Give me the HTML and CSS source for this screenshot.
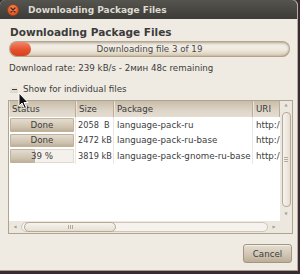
FILE: index.html
```html
<!DOCTYPE html>
<html lang="en">
<head>
    <meta charset="UTF-8">
    <title>Downloading Package Files</title>
    <link rel="stylesheet" href="styles.css">
</head>
<body>
    <div class="window">
        <div class="titlebar">
            <span class="close">
                <svg width="12" height="12" viewBox="0 0 12 12">
                    <circle cx="6" cy="6" r="5.5" fill="#e6602c" stroke="#9c3d17" stroke-width="1"/>
                    <circle cx="6" cy="4.5" r="3.5" fill="#f3936a" opacity="0.5"/>
                    <path d="M4 4 L8 8 M8 4 L4 8" stroke="#4a2a1c" stroke-width="1.3" stroke-linecap="round"/>
                </svg>
            </span>
            <span class="title">Downloading Package Files</span>
        </div>

        <div class="content">
            <h1 class="heading">Downloading Package Files</h1>

            <div class="progress">
                <div class="progress-fill"></div>
                <span class="progress-text">Downloading file 3 of 19</span>
            </div>

            <p class="rate">Download rate: 239 kB/s - 2мин 48с remaining</p>

            <div class="expander">
                <span class="exp-box"></span>
                <span class="exp-label">Show for individual files</span>
            </div>

            <div class="frame">
                <div class="view">
                    <div class="list">
                        <div class="row head">
                            <div class="cell">Status</div>
                            <div class="cell">Size</div>
                            <div class="cell">Package</div>
                            <div class="cell">URI</div>
                        </div>
                        <div class="row">
                            <div class="cell status"><div class="bar"><div class="bar-fill" style="width: 100%"></div><span>Done</span></div></div>
                            <div class="cell size">2058  B</div>
                            <div class="cell">language-pack-ru</div>
                            <div class="cell uri">http:/</div>
                        </div>
                        <div class="row">
                            <div class="cell status"><div class="bar"><div class="bar-fill" style="width: 100%"></div><span>Done</span></div></div>
                            <div class="cell size">2472 kB</div>
                            <div class="cell">language-pack-ru-base</div>
                            <div class="cell uri">http:/</div>
                        </div>
                        <div class="row">
                            <div class="cell status"><div class="bar"><div class="bar-fill" style="width: 39%"></div><span>39 %</span></div></div>
                            <div class="cell size">3819 kB</div>
                            <div class="cell">language-pack-gnome-ru-base</div>
                            <div class="cell uri">http:/</div>
                        </div>
                    </div>
                    <div class="vscroll">
                        <span class="arrow">&#9650;</span>
                        <div class="vslider"><span class="grip-h"></span></div>
                        <span class="arrow">&#9660;</span>
                    </div>
                </div>
                <div class="hscroll">
                    <span class="arrow">&#9664;</span>
                    <div class="htrough">
                        <div class="hslider"><span class="grip-v"></span></div>
                    </div>
                    <span class="arrow">&#9654;</span>
                    <span class="corner"></span>
                </div>
            </div>

            <div class="buttons">
                <button class="btn">Cancel</button>
            </div>
        </div>

        <!-- mouse pointer sitting over the expander -->
        <svg class="cursor" width="12" height="18" viewBox="0 0 12 18">
            <path d="M1 1 L1 14 L4 11 L6.5 16.5 L8.5 15.5 L6 10.5 L10 10.5 Z" fill="#111" stroke="#fff" stroke-width="1"/>
        </svg>
    </div>
</body>
</html>
```

FILE: styles.css
```css
body {
    margin: 0;
    padding: 0;
    width: 300px;
    height: 274px;
    overflow: hidden;
    background: #3a2a33;
    font-family: 'DejaVu Sans', sans-serif;
    font-size: 8.7px;
    color: #3c3c3c;
}

.window {
    position: relative;
    width: 297px;
    height: 270px;
    background: #f0ebe2;
    border-right: 1px solid #b8ad9c;
    border-bottom: 1px solid #a89d8b;
    border-radius: 5px 5px 0 0;
}

.titlebar {
    display: flex;
    align-items: center;
    height: 19px;
    padding-left: 7px;
    background: linear-gradient(#56544e, #3c3b37);
    border-radius: 5px 5px 0 0;
}

.close {
    display: flex;
    width: 12px;
    height: 12px;
}

.title {
    margin-left: 9px;
    font-weight: bold;
    font-size: 9px;
    color: #dfdbd2;
}

.content {
    padding: 0 4px 0 8px;
}

.heading {
    margin: 6px 0 0 2px;
    font-size: 10.5px;
    line-height: 14px;
    font-weight: bold;
    color: #3c3c3c;
}

.progress {
    position: relative;
    display: flex;
    align-items: center;
    justify-content: center;
    height: 16px;
    margin: 2px 3px 0 1px;
    border-radius: 8px;
    background: linear-gradient(#f7f4ef, #efe9df 55%, #d3c6af);
    box-shadow: inset 1px 2px 3px rgba(110, 85, 50, 0.55), inset -1px -1px 2px rgba(140, 115, 80, 0.55);
}

.progress-fill {
    position: absolute;
    left: 1px;
    top: 1px;
    width: 21px;
    height: 14px;
    border-radius: 7px;
    background: linear-gradient(#f4866a, #e5512f 55%, #d6401f);
}

.progress-text {
    position: relative;
    color: #4a4a4a;
}

.rate {
    margin: 5px 0 0 1px;
    line-height: 12px;
}

.expander {
    display: flex;
    align-items: center;
    height: 12px;
    margin-top: 9px;
    padding-left: 2px;
}

.exp-box {
    position: relative;
    width: 8px;
    height: 8px;
    background: linear-gradient(#f3efe8, #ddd4c5);
    border-radius: 1px;
}

.exp-box::after {
    content: "";
    position: absolute;
    left: 2px;
    top: 3.5px;
    width: 5px;
    height: 1px;
    background: #3c3c3c;
}

.exp-label {
    margin-left: 5px;
}

.frame {
    margin-top: 5px;
    border: 1px solid #aea492;
    background: #ede8df;
}

.view {
    display: flex;
    height: 120px;
}

.list {
    width: 271px;
    background: #ffffff;
    overflow: hidden;
}

.row {
    display: grid;
    grid-template-columns: 67px 38px 139px 27px;
    height: 15.5px;
}

.row .cell {
    display: flex;
    align-items: center;
    padding-left: 3px;
    white-space: pre;
    overflow: hidden;
    border-right: 1px solid #ebe7e0;
}

.row .size {
    font-size: 8.2px;
    padding-left: 2px;
}

.row .uri {
    border-right: none;
}

.row.head {
    height: 16px;
    background: linear-gradient(#c9bda9, #ddd5c7 60%, #e4ddd1);
}

.row.head .cell {
    border-right: 1px solid #b9ad99;
    box-shadow: inset 1px 0 0 #eae4da;
}

.row .status {
    padding: 1px;
}

.bar {
    position: relative;
    display: flex;
    align-items: center;
    justify-content: center;
    width: 64px;
    height: 13.5px;
    background: #f4f1ec;
    box-shadow: inset 0 0 0 1px #e0d9ce;
}

.bar-fill {
    position: absolute;
    left: 0;
    top: 0;
    bottom: 0;
    border-radius: 2px;
    background: linear-gradient(#e6dfd3, #cdc1ad 70%, #b8a991);
    box-shadow: inset 0 0 0 1px #c0b29c;
}

.bar span {
    position: relative;
}

.vscroll {
    display: flex;
    flex-direction: column;
    align-items: center;
    width: 12px;
}

.arrow {
    font-size: 4px;
    line-height: 8px;
    color: #a89f91;
}

.vslider {
    display: flex;
    align-items: center;
    justify-content: center;
    width: 9px;
    height: 95px;
    margin: 3px 0;
    border: 1px solid #b5aa98;
    border-radius: 4px;
    background: linear-gradient(90deg, #f6f3ee, #e6dfd3);
    box-sizing: border-box;
}

.grip-h {
    width: 4px;
    height: 5px;
    background: repeating-linear-gradient(#b5aa98 0 1px, transparent 1px 2px);
}

.hscroll {
    display: flex;
    align-items: center;
    height: 12px;
}

.hscroll .arrow {
    width: 12px;
    text-align: center;
}

.htrough {
    flex: 1;
    height: 10px;
    border: 1px solid #cfc6b7;
    border-radius: 5px;
    background: #f6f3ee;
    box-sizing: border-box;
}

.hslider {
    display: flex;
    align-items: center;
    justify-content: center;
    width: 92px;
    height: 10px;
    margin: -1px 0 0 2px;
    border: 1px solid #b5aa98;
    border-radius: 5px;
    background: linear-gradient(#f6f3ee, #e6dfd3);
    box-sizing: border-box;
}

.grip-v {
    width: 5px;
    height: 4px;
    background: repeating-linear-gradient(90deg, #b5aa98 0 1px, transparent 1px 2px);
}

.corner {
    width: 12px;
}

.buttons {
    display: flex;
    justify-content: flex-end;
    margin-top: 10px;
    padding-right: 1px;
}

.btn {
    width: 49px;
    height: 19px;
    padding: 0;
    font-family: inherit;
    font-size: 8.7px;
    color: #3c3c3c;
    border: 1px solid #a39680;
    border-radius: 3px;
    background: linear-gradient(#e4ddd1, #cfc4b2 60%, #bcae97);
    box-shadow: inset 0 1px 0 #f3efe8;
}

.cursor {
    position: absolute;
    left: 18px;
    top: 92px;
}
```
